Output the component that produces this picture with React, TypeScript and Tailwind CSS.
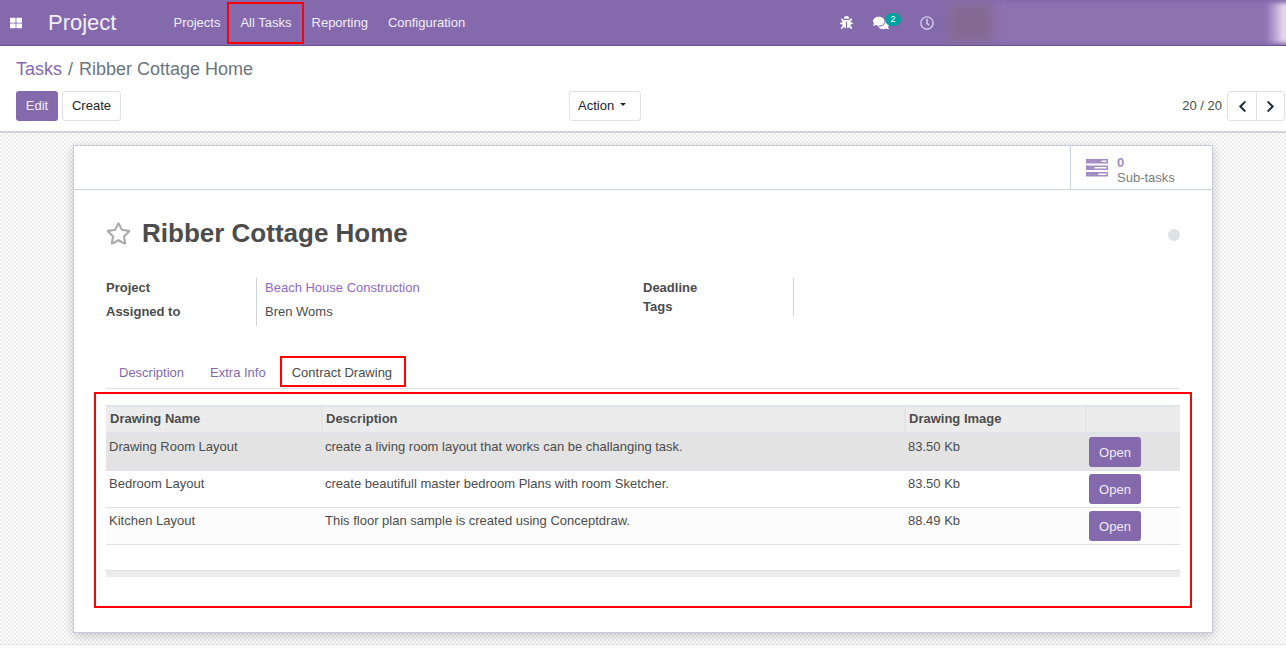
import { FaBug, FaChevronLeft, FaChevronRight, FaComments, FaRegClock, FaRegStar, FaThLarge } from 'react-icons/fa';

const menuItems = ['Projects', 'All Tasks', 'Reporting', 'Configuration'];

const drawings = [
  { name: 'Drawing Room Layout', description: 'create a living room layout that works can be challanging task.', size: '83.50 Kb', rowClass: 'bg-[#e3e3e3] h-[37px]' },
  { name: 'Bedroom Layout', description: 'create beautifull master bedroom Plans with room Sketcher.', size: '83.50 Kb', rowClass: 'bg-white h-[37px]' },
  { name: 'Kitchen Layout', description: 'This floor plan sample is created using Conceptdraw.', size: '88.49 Kb', rowClass: 'bg-[#fcfcfc] h-[37px]' },
];

function TasksIcon() {
  return (
    <svg width="22" height="18" viewBox="0 0 22 18" className="shrink-0">
      <path fill="#a38dc3" fillRule="evenodd" d="M0 0h22v4.5H0zM15.5 1.5v1.5h5V1.5zM0 6.5h22V11H0zM8.5 8v1.5h12V8zM0 13h22v4.500H0zM12.500 14.500V16h8v-1.500z" />
    </svg>
  );
}

function Navbar() {
  return (
    <nav className="relative h-[46px] shrink-0 bg-[#846aac] border-b border-[#6a5190] flex items-center text-[13px] text-white overflow-hidden">
      <FaThLarge className="ml-[10px] w-[12px] h-[12px] text-white" />
      <span className="ml-[26px] text-[22px] text-[#f4f0fa]">Project</span>
      <div className="ml-[57px] flex gap-5 text-[#f1edf7]">
        {menuItems.map((item) => (
          <span key={item}>{item}</span>
        ))}
      </div>
      <div className="ml-auto flex items-center mr-[352px]">
        <FaBug className="w-[13px] h-[13px] text-white" />
        <span className="relative ml-[20px] mr-[26px]">
          <FaComments className="w-[16px] h-[16px] text-white" />
          <span className="absolute left-[12px] -top-[2px] w-[16px] h-[13px] rounded-full bg-[#00a09d] text-[9px] leading-[13px] text-center text-white">2</span>
        </span>
        <FaRegClock className="ml-[5px] w-[14px] h-[14px] text-[#d8cfe6]" />
      </div>
      <div className="absolute right-0 top-[3px] bottom-[2px] w-[338px] bg-[#8d72b2] blur-[2px]">
        <div className="absolute left-0 top-0 bottom-0 w-[45px] bg-[#846a93] blur-[5px]" />
        <div className="absolute -right-[2px] top-0 bottom-0 w-[22px] bg-gradient-to-r from-[#8d72b2] to-[#fff0ff]" />
      </div>
    </nav>
  );
}

function ControlPanel() {
  return (
    <div className="h-[87px] shrink-0 bg-white border-b-2 border-[#ced4da] px-4 text-[13px]">
      <div className="h-[45px] flex items-center text-[18px] pt-[2px] text-[#6c757d]">
        <span className="text-[#846aac]">Tasks</span>
        <span className="mx-[6px]">/</span>
        <span>Ribber Cottage Home</span>
      </div>
      <div className="flex items-center h-[30px] relative">
        <button className="w-[42px] h-[30px] rounded-[3px] bg-[#846aac] text-[#f1edf7]">Edit</button>
        <button className="ml-[4px] w-[59px] h-[30px] rounded-[3px] border border-[#dee2e6] bg-white text-[#212529]">Create</button>
        <button className="absolute left-[553px] w-[72px] h-[30px] rounded-[3px] border border-[#dee2e6] bg-white text-[#212529] flex items-center pl-[8px] gap-[6px]">
          Action
          <span className="mb-[3px] border-x-[3px] border-t-[3px] border-x-transparent border-t-[#212529]" />
        </button>
        <span className="ml-auto mr-[5px] text-[#4c4c4c]">20 / 20</span>
        <div className="flex h-[30px] -mr-[15px] rounded-[3px] border border-[#dee2e6] text-[#212b3a]">
          <span className="w-[29px] flex items-center justify-center border-r border-[#dee2e6]">
            <FaChevronLeft className="w-[13px] h-[13px]" />
          </span>
          <span className="w-[27px] flex items-center justify-center">
            <FaChevronRight className="w-[13px] h-[13px]" />
          </span>
        </div>
      </div>
    </div>
  );
}

function DrawingTable() {
  return (
    <div className="mt-[16px]">
      <table className="w-full table-fixed border-collapse text-[13px] text-[#4c4c4c]">
        <thead>
          <tr className="h-[27px] bg-[#ececec] border-t-2 border-b-2 border-[#e1e3ea] text-left font-bold">
            <th className="w-[216px] pl-[4px] pb-[2px] border-r-2 border-[#e4e4e8]">Drawing Name</th>
            <th className="w-[583px] pl-[3px] pb-[2px] border-r-2 border-[#e4e4e8]">Description</th>
            <th className="w-[181px] pl-[3px] pb-[2px] border-r-2 border-[#e4e4e8]">Drawing Image</th>
            <th />
          </tr>
        </thead>
        <tbody>
          {drawings.map((row) => (
            <tr key={row.name} className={`${row.rowClass} border-b border-[#dee2e6] align-top`}>
              <td className="pl-[3px] pt-[3px]">{row.name}</td>
              <td className="pl-[3px] pt-[3px]">{row.description}</td>
              <td className="pl-[3px] pt-[3px]">{row.size}</td>
              <td className="pl-[3px] pt-[3px]">
                <button className="flex items-center justify-center w-[52px] h-[30px] pt-[2px] rounded-[3px] bg-[#846aac] text-[#f1edf7]">Open</button>
              </td>
            </tr>
          ))}
        </tbody>
      </table>
      <div className="mt-[25px] h-[7px] bg-[#ececec] border-t border-[#dee2e6]" />
    </div>
  );
}

function TaskSheet() {
  return (
    <div className="relative mx-auto w-[1140px] h-[488px] bg-white border border-[#c9c9dc] shadow-[0_3px_10px_rgba(0,0,0,0.2)] text-[13px] text-[#4c4c4c]">
      <div className="h-[44px] border-b border-[#ced4da] flex justify-end">
        <div className="w-[142px] border-l border-[#ced4da] flex items-center pl-[15px] gap-[9px]">
          <TasksIcon />
          <div className="leading-[15px] pt-[4px]">
            <div className="font-bold text-[#a38dc3]">0</div>
            <div className="text-[#7c7c7c]">Sub-tasks</div>
          </div>
        </div>
      </div>
      <div className="px-[32px]">
        <div className="mt-[26px] flex items-center h-[35px]">
          <FaRegStar className="w-[25px] h-[25px] text-[#a9a9a9]" />
          <h1 className="ml-[11px] text-[26px] font-bold text-[#4c4c4c]">Ribber Cottage Home</h1>
          <span className="ml-auto mt-[2px] w-3 h-3 rounded-full bg-[#dee2e6]" />
        </div>
        <div className="mt-[27px] flex h-[48px]">
          <div className="w-[151px] shrink-0 border-r border-[#ced4da] font-bold leading-[24px]">
            <div className="-mt-[2px]">Project</div>
            <div>Assigned to</div>
          </div>
          <div className="w-[386px] pl-[8px] leading-[24px]">
            <div className="-mt-[2px] text-[#8e6bc0]">Beach House Construction</div>
            <div>Bren Woms</div>
          </div>
          <div className="w-[151px] h-[38px] border-r border-[#ced4da] font-bold leading-[19px]">
            <div>Deadline</div>
            <div>Tags</div>
          </div>
        </div>
        <div className="mt-[31px] h-[32px] flex border-b border-[#dee2e6] pl-[13px] items-center text-[#846aac]">
          <span>Description</span>
          <span className="ml-[26px]">Extra Info</span>
          <span className="ml-[26px] text-[#4c4c4c]">Contract Drawing</span>
        </div>
        <DrawingTable />
      </div>
    </div>
  );
}

export default function App() {
  return (
    <div className="relative h-[653px] w-[1286px] overflow-hidden flex flex-col bg-white font-['Liberation_Sans',Arial,sans-serif]">
      <Navbar />
      <ControlPanel />
      <div className="h-[512px] shrink-0 pt-[12px] border-b border-[#e4e4e4] bg-[repeating-conic-gradient(#ececec_0_25%,#ffffff_0_50%)] bg-[length:4px_4px]">
        <TaskSheet />
      </div>
      {/* red annotation boxes drawn over the screenshot */}
      <div className="absolute left-[227px] top-[2px] w-[77px] h-[42px] border-2 border-[#ff0000]" />
      <div className="absolute left-[280px] top-[356px] w-[126px] h-[31px] border-2 border-[#ff0000]" />
      <div className="absolute left-[94px] top-[392px] w-[1098px] h-[216px] border-2 border-[#ff0000]" />
    </div>
  );
}
